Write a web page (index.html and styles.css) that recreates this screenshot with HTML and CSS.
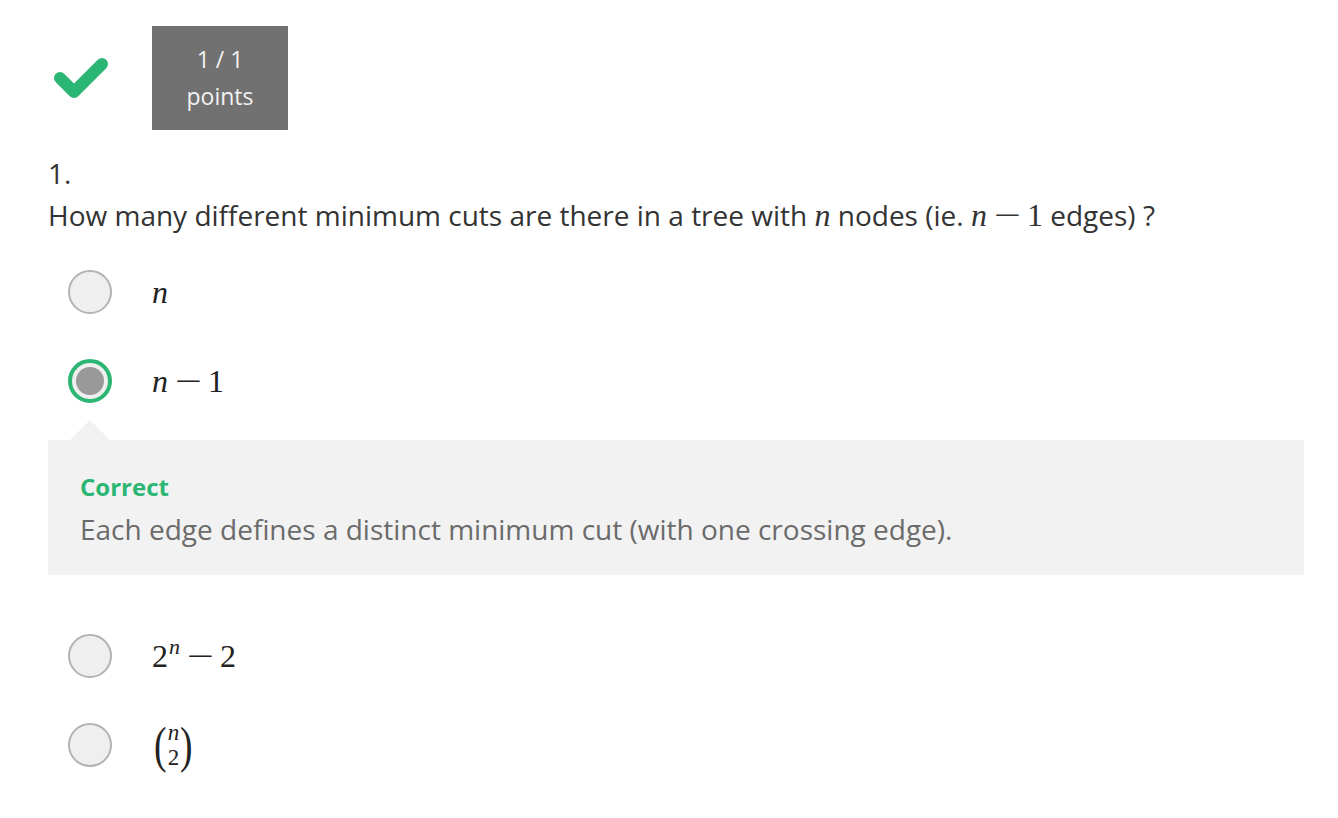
FILE: index.html
```html
<!DOCTYPE html>
<html>
<head>
<meta charset="utf-8">
<link rel="stylesheet" href="styles.css">
</head>
<body>
<div class="page">
  <div class="header">
    <svg class="check" width="56" height="44" viewBox="0 0 56 44">
      <polyline points="8,22 22,36 50,8" fill="none" stroke="#2bb673" stroke-width="12" stroke-linecap="round" stroke-linejoin="round"/>
    </svg>
    <div class="score"><span>1 / 1</span><span>points</span></div>
  </div>
  <div class="qnum">1.</div>
  <div class="question">How many different minimum cuts are there in a tree with <span class="mi">n</span> nodes (ie. <span class="mi">n</span><span class="mo">−</span><span class="mn">1</span> edges) ?</div>
  <div class="options">
    <div class="option">
      <span class="radio"></span>
      <span class="math"><span class="mi">n</span></span>
    </div>
    <div class="option">
      <span class="radio selected"><span class="dot"></span></span>
      <span class="math"><span class="mi">n</span><span class="mo">−</span><span class="mn">1</span></span>
    </div>
    <div class="feedback">
      <div class="fb-title">Correct</div>
      <div class="fb-text">Each edge defines a distinct minimum cut (with one crossing edge).</div>
    </div>
    <div class="option after-fb">
      <span class="radio"></span>
      <span class="math"><span class="mn">2</span><sup class="mi sup">n</sup><span class="mo">−</span><span class="mn">2</span></span>
    </div>
    <div class="option">
      <span class="radio"></span>
      <span class="math binom"><span class="paren">(</span><span class="stack"><span class="mi">n</span><span class="mn">2</span></span><span class="paren">)</span></span>
    </div>
  </div>
</div>
</body>
</html>
```

FILE: styles.css
```css
html, body {
  margin: 0;
  padding: 0;
  background: #ffffff;
}
body {
  font-family: "Open Sans", "DejaVu Sans", sans-serif;
  color: #333333;
}
.page {
  padding: 26px 34px 0 48px;
}
.header {
  display: flex;
  align-items: center;
  height: 104px;
}
.check {
  display: block;
  margin-left: 4px;
}
.score {
  margin-left: 44px;
  width: 136px;
  height: 104px;
  background: #717171;
  color: #f2f2f2;
  font-size: 23px;
  line-height: 37px;
  display: flex;
  flex-direction: column;
  align-items: center;
  justify-content: center;
}
.qnum {
  margin-top: 22px;
  font-size: 28px;
  line-height: 42px;
}
.question {
  font-size: 28px;
  line-height: 42px;
}
.mi {
  font-family: "Liberation Serif", "DejaVu Serif", serif;
  font-style: italic;
  font-size: 32px;
  line-height: 1;
}
.mn {
  font-family: "Liberation Serif", "DejaVu Serif", serif;
  font-size: 32px;
  line-height: 1;
}
.mo {
  display: inline-block;
  font-family: "Liberation Serif", "DejaVu Serif", serif;
  font-size: 32px;
  line-height: 1;
  margin: 0 11px;
  transform: scaleX(1.5);
}
.options {
  margin-top: 34px;
  display: flex;
  flex-direction: column;
}
.option {
  display: flex;
  align-items: center;
  height: 44px;
  margin-left: 20px;
  margin-bottom: 45px;
}
.option.after-fb {
  margin-top: 59px;
}
.radio {
  width: 40px;
  height: 40px;
  border: 2px solid #b3b3b3;
  border-radius: 50%;
  background: #efefef;
  flex: none;
  display: flex;
  align-items: center;
  justify-content: center;
}
.radio.selected {
  width: 36px;
  height: 36px;
  border: 4px solid #2bb673;
}
.dot {
  width: 28px;
  height: 28px;
  border-radius: 50%;
  background: #999999;
}
.math {
  margin-left: 40px;
  color: #222;
  display: flex;
  align-items: baseline;
}
.sup {
  font-size: 22px;
  position: relative;
  top: -13px;
  margin-left: 1px;
}
.binom {
  align-items: center;
}
.paren {
  font-family: "Liberation Serif", "DejaVu Serif", serif;
  font-size: 50px;
  line-height: 52px;
  transform: scaleX(0.75);
}
.stack {
  display: flex;
  flex-direction: column;
  align-items: center;
  line-height: 25px;
  margin: 0 -1px;
}
.stack .mi, .stack .mn {
  font-size: 23px;
  line-height: 25px;
}
.feedback {
  position: relative;
  margin-top: -8px;
  margin-bottom: 0;
  background: #f2f2f2;
  height: 135px;
  padding: 0 32px;
  box-sizing: border-box;
  display: flex;
  flex-direction: column;
  justify-content: center;
}
.feedback::before {
  content: "";
  position: absolute;
  top: -20px;
  left: 22px;
  border-left: 20px solid transparent;
  border-right: 20px solid transparent;
  border-bottom: 20px solid #f2f2f2;
}
.fb-title {
  color: #2bb673;
  font-weight: 700;
  font-size: 24px;
  line-height: 42px;
}
.fb-text {
  color: #6b6b6b;
  font-size: 28px;
  line-height: 42px;
}
```
